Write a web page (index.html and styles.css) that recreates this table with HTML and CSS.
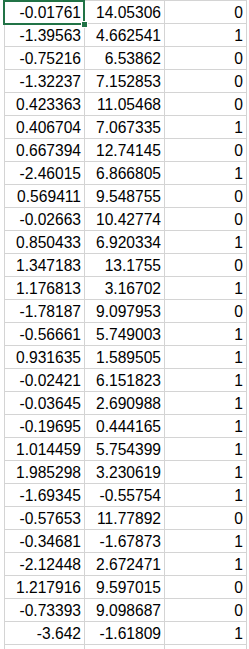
FILE: index.html
```html
<!DOCTYPE html>
<html>
<head>
<meta charset="utf-8">
<link rel="stylesheet" href="styles.css">
</head>
<body>
<div class="wrap">
<div class="sheet">
<div class="c">-0.01761</div><div class="c">14.05306</div><div class="c">0</div>
<div class="c">-1.39563</div><div class="c">4.662541</div><div class="c">1</div>
<div class="c">-0.75216</div><div class="c">6.53862</div><div class="c">0</div>
<div class="c">-1.32237</div><div class="c">7.152853</div><div class="c">0</div>
<div class="c">0.423363</div><div class="c">11.05468</div><div class="c">0</div>
<div class="c">0.406704</div><div class="c">7.067335</div><div class="c">1</div>
<div class="c">0.667394</div><div class="c">12.74145</div><div class="c">0</div>
<div class="c">-2.46015</div><div class="c">6.866805</div><div class="c">1</div>
<div class="c">0.569411</div><div class="c">9.548755</div><div class="c">0</div>
<div class="c">-0.02663</div><div class="c">10.42774</div><div class="c">0</div>
<div class="c">0.850433</div><div class="c">6.920334</div><div class="c">1</div>
<div class="c">1.347183</div><div class="c">13.1755</div><div class="c">0</div>
<div class="c">1.176813</div><div class="c">3.16702</div><div class="c">1</div>
<div class="c">-1.78187</div><div class="c">9.097953</div><div class="c">0</div>
<div class="c">-0.56661</div><div class="c">5.749003</div><div class="c">1</div>
<div class="c">0.931635</div><div class="c">1.589505</div><div class="c">1</div>
<div class="c">-0.02421</div><div class="c">6.151823</div><div class="c">1</div>
<div class="c">-0.03645</div><div class="c">2.690988</div><div class="c">1</div>
<div class="c">-0.19695</div><div class="c">0.444165</div><div class="c">1</div>
<div class="c">1.014459</div><div class="c">5.754399</div><div class="c">1</div>
<div class="c">1.985298</div><div class="c">3.230619</div><div class="c">1</div>
<div class="c">-1.69345</div><div class="c">-0.55754</div><div class="c">1</div>
<div class="c">-0.57653</div><div class="c">11.77892</div><div class="c">0</div>
<div class="c">-0.34681</div><div class="c">-1.67873</div><div class="c">1</div>
<div class="c">-2.12448</div><div class="c">2.672471</div><div class="c">1</div>
<div class="c">1.217916</div><div class="c">9.597015</div><div class="c">0</div>
<div class="c">-0.73393</div><div class="c">9.098687</div><div class="c">0</div>
<div class="c">-3.642</div><div class="c">-1.61809</div><div class="c">1</div>
<div class="c"></div><div class="c"></div><div class="c"></div>
</div>
<div class="sel"></div>
<div class="handle"></div>
</div>
</body>
</html>
```
FILE: styles.css
```css
html, body {
  margin: 0;
  padding: 0;
  background: #ffffff;
}
body {
  width: 249px;
  height: 649px;
  overflow: hidden;
}
.wrap {
  position: relative;
  padding-left: 4px;
}
.sheet {
  display: grid;
  grid-template-columns: 80px 80px 82px;
  grid-auto-rows: 23px;
  border-right: 1px solid #d4d4d4;
  width: 242px;
}
.c {
  border-left: 1px solid #d4d4d4;
  border-top: 1px solid #d4d4d4;
  text-align: right;
  padding-right: 3px;
  padding-top: 2px;
  font-family: "Liberation Sans", Arial, sans-serif;
  font-size: 15.6px;
  line-height: 20px;
  color: #000;
  white-space: nowrap;
  overflow: hidden;
}
.sel {
  position: absolute;
  left: 3px;
  top: 0;
  width: 78px;
  height: 21px;
  border: 2px solid #217346;
}
.handle {
  position: absolute;
  left: 81px;
  top: 21px;
  width: 5px;
  height: 5px;
  background: #217346;
  border: 1px solid #ffffff;
}
```
